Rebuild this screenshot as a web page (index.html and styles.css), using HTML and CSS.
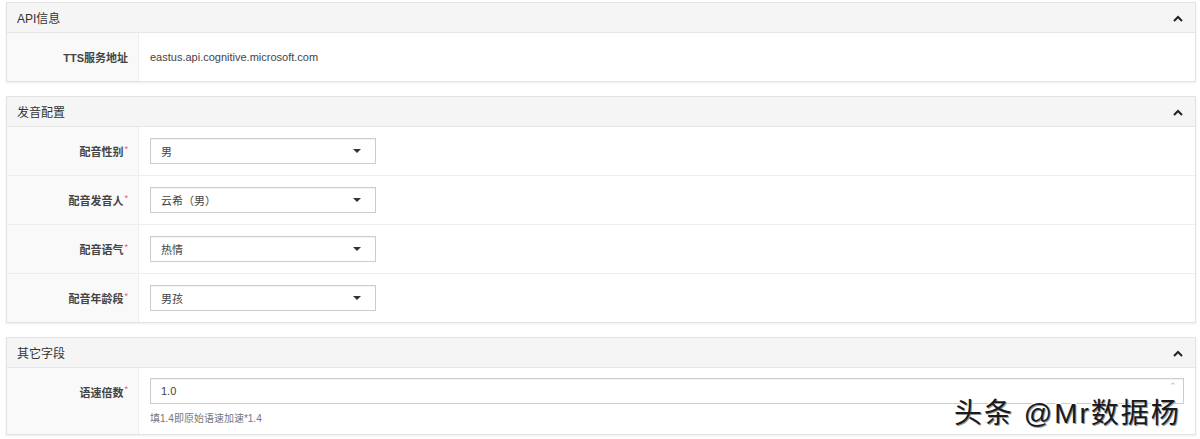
FILE: index.html
```html
<!DOCTYPE html>
<html lang="zh-cn">
<head>
    <meta charset="UTF-8">
    <title>TTS配置</title>
    <link rel="stylesheet" href="styles.css">
</head>
<body>
    <div class="page">
        <div class="panel">
            <div class="panel-head">
                <span>API信息</span>
                <svg class="chev" width="10" height="7" viewBox="0 0 10 7"><path d="M1 6 L5 2 L9 6" fill="none" stroke="#222" stroke-width="2"/></svg>
            </div>
            <div class="row">
                <div class="label">TTS服务地址</div>
                <div class="value"><span class="text">eastus.api.cognitive.microsoft.com</span></div>
            </div>
        </div>

        <div class="panel">
            <div class="panel-head">
                <span>发音配置</span>
                <svg class="chev" width="10" height="7" viewBox="0 0 10 7"><path d="M1 6 L5 2 L9 6" fill="none" stroke="#222" stroke-width="2"/></svg>
            </div>
            <div class="row">
                <div class="label">配音性别<i>*</i></div>
                <div class="value"><div class="select">男<b class="caret"></b></div></div>
            </div>
            <div class="row">
                <div class="label">配音发音人<i>*</i></div>
                <div class="value"><div class="select">云希（男）<b class="caret"></b></div></div>
            </div>
            <div class="row">
                <div class="label">配音语气<i>*</i></div>
                <div class="value"><div class="select">热情<b class="caret"></b></div></div>
            </div>
            <div class="row">
                <div class="label">配音年龄段<i>*</i></div>
                <div class="value"><div class="select">男孩<b class="caret"></b></div></div>
            </div>
        </div>

        <div class="panel">
            <div class="panel-head">
                <span>其它字段</span>
                <svg class="chev" width="10" height="7" viewBox="0 0 10 7"><path d="M1 6 L5 2 L9 6" fill="none" stroke="#222" stroke-width="2"/></svg>
            </div>
            <div class="row tall">
                <div class="label">语速倍数<i>*</i></div>
                <div class="value">
                    <div class="input">1.0<span class="spin">⌃</span></div>
                    <div class="help">填1.4即原始语速加速*1.4</div>
                </div>
            </div>
        </div>
    </div>
    <div class="watermark">头条 @Mr数据杨</div>
</body>
</html>
```
FILE: styles.css
```css
body {
    margin: 0;
    font-family: "Liberation Sans", Arial, "Noto Sans CJK SC", sans-serif;
    font-size: 11px;
    color: #333;
    background: #fff;
}
.page {
    padding: 2px 4px 0 6px;
}
.panel {
    border: 1px solid #e3e3e3;
    box-shadow: 0 1px 2px rgba(0, 0, 0, 0.08);
    margin-bottom: 14px;
}
.panel-head {
    height: 29px;
    background: #f5f5f5;
    border-bottom: 1px solid #e6e6e6;
    display: flex;
    align-items: center;
    justify-content: space-between;
    padding: 0 12px 0 10px;
    font-size: 12px;
    color: #333;
}
.chev {
    margin-top: 1px;
}
.row {
    display: flex;
    min-height: 48px;
    border-bottom: 1px solid #eee;
}
.row:last-child {
    border-bottom: none;
}
.label {
    width: 121px;
    flex: none;
    background: #f9f9f9;
    border-right: 1px solid #eee;
    text-align: right;
    padding-right: 10px;
    font-weight: bold;
    font-size: 11px;
    color: #444;
    display: flex;
    align-items: center;
    justify-content: flex-end;
}
.label i {
    color: #e4577a;
    font-style: normal;
    font-weight: normal;
    font-size: 9px;
    margin-top: -5px;
    margin-left: 1px;
}
.value {
    flex: 1;
    display: flex;
    flex-direction: column;
    justify-content: center;
    padding-left: 11px;
}
.text {
    font-size: 11px;
    color: #444;
}
.select {
    box-sizing: border-box;
    width: 226px;
    height: 26px;
    border: 1px solid #ccc;
    box-shadow: inset 0 1px 1px rgba(0, 0, 0, 0.05);
    display: flex;
    align-items: center;
    justify-content: space-between;
    padding: 0 14px 0 10px;
    font-size: 11px;
    color: #444;
}
.caret {
    width: 0;
    height: 0;
    border-left: 4px solid transparent;
    border-right: 4px solid transparent;
    border-top: 4px solid #333;
}
.tall {
    min-height: 66px;
}
.tall .label {
    align-items: flex-start;
    padding-top: 16px;
}
.tall .label i {
    margin-top: 0;
}
.tall .value {
    justify-content: flex-start;
    padding-top: 10px;
    padding-right: 11px;
}
.input {
    height: 24px;
    border: 1px solid #ccc;
    box-shadow: inset 0 1px 1px rgba(0, 0, 0, 0.05);
    display: flex;
    align-items: center;
    justify-content: space-between;
    padding: 0 6px 0 10px;
    font-size: 11px;
    color: #444;
}
.spin {
    color: #bbb;
    font-size: 9px;
    align-self: flex-start;
    margin-top: 2px;
}
.help {
    margin-top: 6px;
    font-size: 10px;
    color: #777;
}
.watermark {
    position: absolute;
    left: 954px;
    top: 391px;
    font-family: "Liberation Sans", "Noto Sans CJK SC", sans-serif;
    font-size: 28px;
    letter-spacing: 2px;
    color: #1a1a1a;
    text-shadow: 1px 1px 0 #999, -1px -1px 0 #fff, 1px -1px 0 #fff, -1px 1px 0 #fff;
}
```
